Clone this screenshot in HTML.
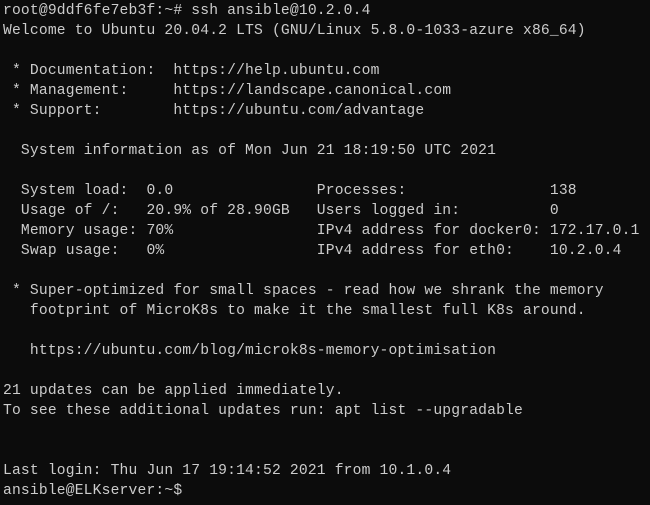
<!DOCTYPE html>
<html><head><meta charset="utf-8"><style>
html,body{margin:0;padding:0;background:#0c0c0c;width:650px;height:505px;overflow:hidden}
pre{margin:0;position:absolute;left:3px;top:1px;font-family:"Liberation Mono",monospace;font-size:14.67px;letter-spacing:0.17px;line-height:20px;color:#cccccc;white-space:pre}
</style></head><body><pre>root@9ddf6fe7eb3f:~# ssh ansible@10.2.0.4
Welcome to Ubuntu 20.04.2 LTS (GNU/Linux 5.8.0-1033-azure x86_64)

 * Documentation:  https://help.ubuntu.com
 * Management:     https://landscape.canonical.com
 * Support:        https://ubuntu.com/advantage

  System information as of Mon Jun 21 18:19:50 UTC 2021

  System load:  0.0                Processes:                138
  Usage of /:   20.9% of 28.90GB   Users logged in:          0
  Memory usage: 70%                IPv4 address for docker0: 172.17.0.1
  Swap usage:   0%                 IPv4 address for eth0:    10.2.0.4

 * Super-optimized for small spaces - read how we shrank the memory
   footprint of MicroK8s to make it the smallest full K8s around.

   https://ubuntu.com/blog/microk8s-memory-optimisation

21 updates can be applied immediately.
To see these additional updates run: apt list --upgradable


Last login: Thu Jun 17 19:14:52 2021 from 10.1.0.4
ansible@ELKserver:~$</pre></body></html>
